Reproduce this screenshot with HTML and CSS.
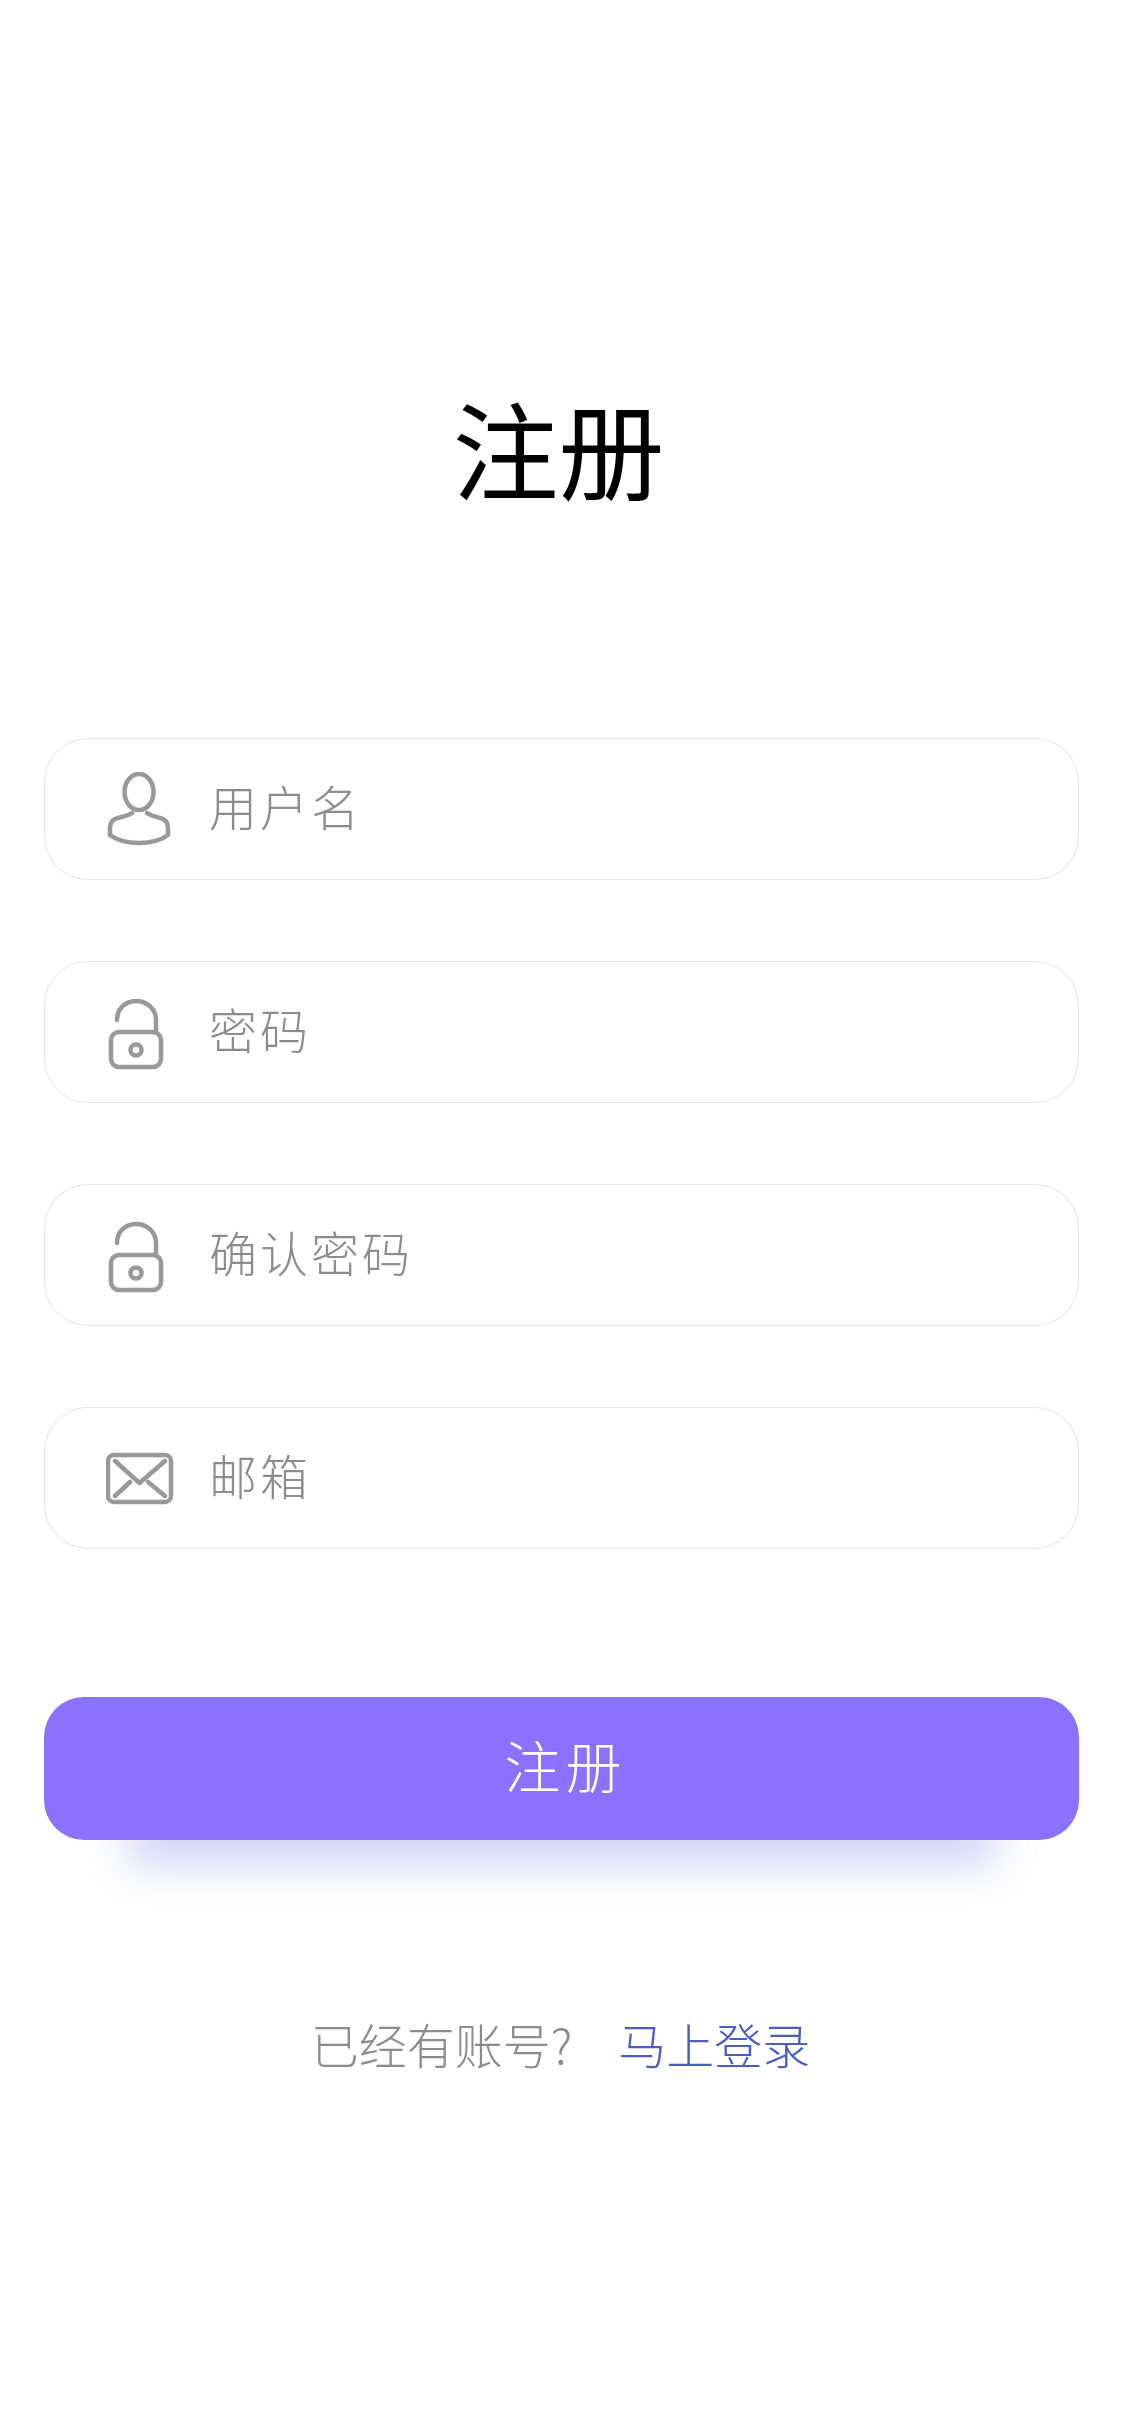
FILE: index.html
```html
<!DOCTYPE html>
<html lang="zh-CN">
<head>
    <meta charset="UTF-8">
    <meta name="viewport" content="width=device-width, initial-scale=1.0">
    <title>注册</title>
    <link rel="stylesheet" href="styles.css">
</head>
<body>
    <h1 class="title">注册</h1>
    <form class="form" onsubmit="event.preventDefault();">
        <label class="field">
            <svg class="icon" viewBox="0 0 68 76">
                <ellipse cx="33" cy="21" rx="14.500" ry="18"/>
                <path d="M26 42 C22 45 14 46 9 48 C5 50 4 53 4 57 V64 C12 70 24 72 33 72 C43 72 54 70 62 64 V57 C62 53 61 50 57 48 C52 46 45 45 41 42"/>
            </svg>
            <input class="input" type="text" placeholder="用户名">
        </label>
        <label class="field">
            <svg class="icon" viewBox="0 0 68 76">
                <path d="M11 26 C11 15 19 7 30 7 C41 7 50 15 50 26 V38"/>
                <rect x="5" y="38" width="50" height="35" rx="8"/>
                <circle cx="30" cy="56" r="5.500"/>
            </svg>
            <input class="input" type="password" placeholder="密码">
        </label>
        <label class="field">
            <svg class="icon" viewBox="0 0 68 76">
                <path d="M11 26 C11 15 19 7 30 7 C41 7 50 15 50 26 V38"/>
                <rect x="5" y="38" width="50" height="35" rx="8"/>
                <circle cx="30" cy="56" r="5.500"/>
            </svg>
            <input class="input" type="password" placeholder="确认密码">
        </label>
        <label class="field">
            <svg class="icon" viewBox="0 0 68 76">
                <rect x="2" y="15" width="63" height="47" rx="6"/>
                <path d="M9 21 L33.500 43 L59 21 M9 56 L24 42 M59 56 L42 42"/>
            </svg>
            <input class="input" type="email" placeholder="邮箱">
        </label>
        <button class="submit" type="submit">注册</button>
    </form>
    <p class="footer">已经有账号?<a class="login" href="#">马上登录</a></p>
</body>
</html>
```

FILE: styles.css
```css
body {
    margin: 0;
    padding: 0 46px 0 44px;
    background-color: #fff;
    font-family: "Noto Sans CJK SC", "Noto Sans", sans-serif;
}
.title {
    margin: 0;
    padding: 372px 6px 0 0;
    font-size: 106px;
    font-weight: 400;
    line-height: 148px;
    text-align: center;
    color: #000;
}
.form {
    display: flex;
    flex-direction: column;
    margin-top: 218px;
}
.field {
    display: flex;
    align-items: center;
    gap: 35px;
    height: 142px;
    margin-bottom: 81px;
    padding: 0 40px 0 61px;
    box-sizing: border-box;
    border: 1.5px solid #e4e4e4;
    border-radius: 44px;
}
.icon {
    flex: none;
    width: 68px;
    height: 76px;
    fill: none;
    stroke: #999;
    stroke-width: 4.500;
    stroke-linecap: round;
    stroke-linejoin: round;
}
.input {
    flex: 1;
    min-width: 0;
    height: 70px;
    padding: 0 0 8px;
    border: none;
    outline: none;
    background: transparent;
    font-family: inherit;
    font-size: 48px;
    font-weight: 300;
    letter-spacing: 3px;
    color: #333;
    will-change: opacity;
}
.input::placeholder {
    color: #8c8c8c;
    opacity: 1;
}
.submit {
    position: relative;
    height: 143px;
    margin-top: 67px;
    padding: 0 0 11px 8px;
    border: none;
    border-radius: 40px;
    background-color: #8a72ff;
    font-family: inherit;
    font-size: 56px;
    font-weight: 300;
    letter-spacing: 5px;
    color: #fff;
}
/* soft blue glow under the button */
.submit::after {
    content: "";
    position: absolute;
    left: 84px;
    right: 84px;
    bottom: -26px;
    height: 60px;
    z-index: -1;
    background-color: rgba(84, 104, 220, 0.27);
    filter: blur(20px);
}
.footer {
    display: flex;
    justify-content: center;
    gap: 46px;
    margin: 168px 0 0;
    padding-right: 2px;
    font-size: 48px;
    font-weight: 300;
    line-height: 70px;
    color: #8c8c8c;
    will-change: opacity;
}
.login {
    color: #4a5ec0;
    text-decoration: none;
}
```
